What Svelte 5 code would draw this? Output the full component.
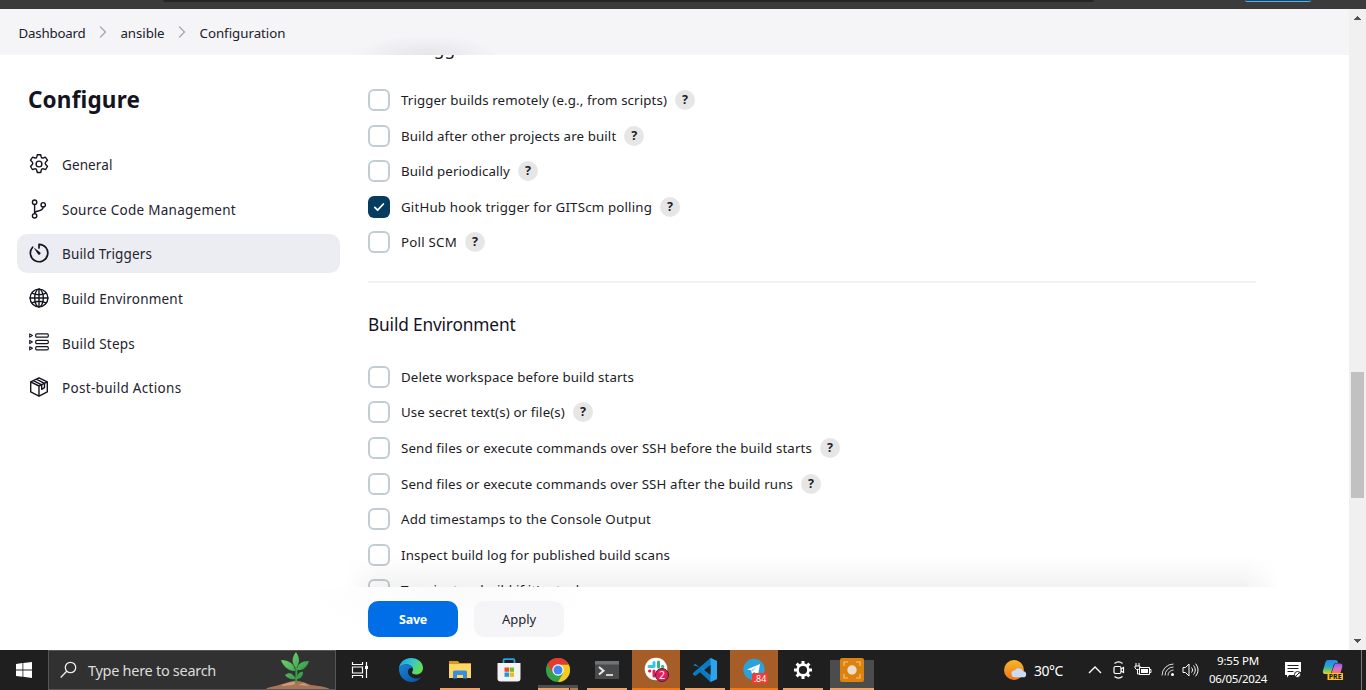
<script>
  const crumbs = [
    { label: 'Dashboard', width: 67 },
    { label: 'ansible', width: 44 },
    { label: 'Configuration', width: 86 }
  ];
  const nav = [
    { id: 'general', label: 'General', width: 50.5 },
    { id: 'scm', label: 'Source Code Management', width: 174 },
    { id: 'triggers', label: 'Build Triggers', width: 90 },
    { id: 'env', label: 'Build Environment', width: 121 },
    { id: 'steps', label: 'Build Steps', width: 73 },
    { id: 'post', label: 'Post-build Actions', width: 119.5 }
  ];
  const triggers = [
    { label: 'Trigger builds remotely (e.g., from scripts)', width: 266, help: true },
    { label: 'Build after other projects are built', width: 215.3, help: true },
    { label: 'Build periodically', width: 109, help: true },
    { label: 'GitHub hook trigger for GITScm polling', width: 251, help: true, checked: true },
    { label: 'Poll SCM', width: 56, help: true }
  ];
  const environment = [
    { label: 'Delete workspace before build starts', width: 233 },
    { label: 'Use secret text(s) or file(s)', width: 164, help: true },
    { label: 'Send files or execute commands over SSH before the build starts', width: 411, help: true },
    { label: 'Send files or execute commands over SSH after the build runs', width: 392, help: true },
    { label: 'Add timestamps to the Console Output', width: 250 },
    { label: 'Inspect build log for published build scans', width: 269 },
    { label: "Terminate a build if it's stuck", width: 182 }
  ];

  function track(node, width) {
    const natural = node.getBoundingClientRect().width;
    const count = node.textContent.length;
    node.style.letterSpacing = `${(width - natural) / count}px`;
  }
</script>

{#snippet option(o)}
  <label class="option">
    <span class="box" class:checked={o.checked}>
      {#if o.checked}
        <svg width="22" height="22" viewBox="0 0 22 22"><path d="M6.800 11.400l2.800 2.800 5.800-6.200" fill="none" stroke="#fff" stroke-width="1.700" stroke-linecap="round" stroke-linejoin="round" /></svg>
      {/if}
    </span>
    <span class="text" use:track={o.width}>{o.label}</span>
    {#if o.help}<span class="help">?</span>{/if}
  </label>
{/snippet}

<div class="screen">
  <div class="chrome"><i class="address"></i><i class="pill"></i></div>

  <div class="view">
    <div class="page">
      <nav class="crumbs">
        {#each crumbs as c, i}
          {#if i}<svg width="8" height="14" viewBox="0 0 8 14"><path d="M1.500 2l5 5-5 5" fill="none" stroke="#a5a5b8" stroke-width="1.300" stroke-linecap="round" stroke-linejoin="round" /></svg>{/if}
          <span use:track={c.width}>{c.label}</span>
        {/each}
      </nav>

      <div class="body">
        <aside>
          <h1 use:track={112}>Configure</h1>
          <ul>
            {#each nav as n}
              <li class:active={n.id === 'triggers'}>
                <svg width="22" height="22" viewBox="0 0 22 22" fill="none" stroke="#14141f" stroke-width="1.400" stroke-linecap="round" stroke-linejoin="round">
                  {#if n.id === 'general'}
                    <path d="M9.300 1.700h3.400l.5 2.300c.3.900 1 1.200 1.900 1l2.200-.8 2.200 3-1.700 1.700c-.8.800-.8 1.800-.1 2.700l1.800 1.900-1.900 3-2.400-.7c-.9-.2-1.500.2-1.800 1l-.7 2.700H9.300l-.7-2.700c-.3-.8-.9-1.200-1.800-1l-2.400.7-1.900-3 1.800-1.900c.7-.9.7-1.900-.1-2.700L2.500 7.200l2.200-3 2.200.8c.9.2 1.600-.1 1.900-1z" /><circle cx="11" cy="11" r="2.900" />
                  {:else if n.id === 'scm'}
                    <circle cx="6.600" cy="4.200" r="2.200" /><circle cx="6.600" cy="17.800" r="2.200" /><circle cx="15.200" cy="6.800" r="2.200" /><path d="M6.600 6.400v9.200M15.200 9c0 3.500-4 3.700-6.200 4.300-1.500.4-2.400 1-2.400 2.300" />
                  {:else if n.id === 'triggers'}
                    <path d="M11 6V2.300A8.700 8.700 0 1 1 4.600 5.200" stroke-width="1.700" /><path d="M6.700 6.700l3.300 5.100a1.200 1.200 0 1 0 1.800-1.500z" fill="#14141f" stroke-width=".6" />
                  {:else if n.id === 'env'}
                    <circle cx="11" cy="11" r="8.900" /><ellipse cx="11" cy="11" rx="4.300" ry="8.900" /><path d="M11 2v18M2 11h18M3.900 6.200c4.300 1.900 9.900 1.900 14.200 0M3.900 15.800c4.300-1.900 9.900-1.900 14.200 0" />
                  {:else if n.id === 'steps'}
                    {#each [4.500, 11, 17.300] as y}
                      <rect x="7.700" y={y - 1.600} width="12.600" height="3.200" rx="1.200" stroke-width="1.200" /><path d="M1.700 {y - 1.600}l2.700 1.600-2.700 1.600z" stroke-width="1.100" />
                    {/each}
                  {:else}
                    <path d="M11 1.800l8.300 4.100v9.900L11 20.200l-8.300-4.400V5.900zM2.700 5.900L11 10l8.300-4.100M11 10v10.200M5.400 4.700l8.300 4.100v4.600l2.800-1.700V7.300L8.200 3.200" />
                  {/if}
                </svg>
                <span use:track={n.width}>{n.label}</span>
              </li>
            {/each}
          </ul>
        </aside>

        <main>
          <section class="first">
            <h2><span use:track={112}>Build Triggers</span></h2>
            {#each triggers as o}{@render option(o)}{/each}
          </section>
          <section class="second">
            <h2><span use:track={147.5}>Build Environment</span></h2>
            {#each environment as o}{@render option(o)}{/each}
          </section>
          <div class="fade"></div>
        </main>
      </div>

      <footer>
        <button class="save"><span use:track={28}>Save</span></button>
        <button><span use:track={34}>Apply</span></button>
      </footer>
    </div>

    <div class="scrollbar">
      <svg width="17" height="17"><path d="M5 11h7v-1h-1v-1h-1v-1h-1v-1h-1v1h-1v1h-1v1h-1z" fill="#505050" /></svg>
      <i></i>
      <svg width="17" height="17"><path d="M5 6h7v1h-1v1h-1v1h-1v1h-1v-1h-1v-1h-1v-1h-1z" fill="#505050" /></svg>
    </div>
  </div>

  <div class="taskbar">
    <div class="start"><svg width="16" height="16" viewBox="0 0 16 16" fill="#fff"><path d="M0 2l6.500-.9v6.400H0zM7.300 1L16 0v7.500H7.300zM0 8.400h6.500v6.400L0 14zM7.300 8.400H16V16l-8.700-1.200z" /></svg></div>
    <div class="search">
      <svg width="18" height="18" viewBox="0 0 18 18" fill="none" stroke="#eee" stroke-width="1.300"><circle cx="10.500" cy="6.500" r="5.200" /><path d="M6.700 10.300L.7 16.500" /></svg>
      <span use:track={128}>Type here to search</span>
      <svg class="plant" width="70" height="38" viewBox="0 0 70 38">
        <defs><linearGradient id="leaf" x2="1" y2="1"><stop stop-color="#7edb73" /><stop offset="1" stop-color="#218b42" /></linearGradient></defs>
        <path d="M0 38c4-3 8-2 13-4 5-1 8-3 14-4 7-1 12 2 18 4 8 1 12 1 19 4z" fill="#a87459" /><path d="M15 34c6-1 9-4 16-3l-4 3-10 1zM32 34l6-2 5 3z" fill="#cf9a7a" />
        <path d="M30 32c1-8 0-15 0-23" stroke="#3c9d48" stroke-width="2" fill="none" />
        <path d="M30 17c-5-5-4-11 0-16 4 6 4 11 0 16zM29 20c-7 0-12-5-14-11 8 0 14 4 14 11zM31 19c0-6 5-9 12-9-2 6-6 10-12 9zM30 28c-5 1-9-1-11-4 4-3 8-2 11 4zM31 28c0-5 3-8 6-7 0 4-2 7-6 7z" fill="url(#leaf)" />
      </svg>
    </div>

    <div class="apps">
      <div class="app taskview"><svg width="18" height="18" viewBox="0 0 18 18" fill="none" stroke="#fff" stroke-width="1.200"><path d="M1.500 1v2.500h10V1M1.500 17v-2.500h10V17M1.500 6h10v6h-10zM15.500 1v16" /><path d="M14 5h3v3h-3z" fill="#fff" stroke="none" /></svg></div>
      <div class="app">
        <svg width="26" height="26" viewBox="0 0 26 26">
          <defs><linearGradient id="edgeTop" x2="1" y2=".4"><stop stop-color="#1c9ee0" /><stop offset=".55" stop-color="#34c6ce" /><stop offset="1" stop-color="#64dd55" /></linearGradient><linearGradient id="edgeLow" x2="1" y2="1"><stop stop-color="#1683d6" /><stop offset="1" stop-color="#0c519e" /></linearGradient></defs>
          <path d="M1 12C1 6 6 1 13 1c7 0 12 4.500 12 10 0 4-3 6.500-7 6.500-2 0-4-.8-4-2 0-.8 1-1.200 1-3C15 9.500 12 7.500 8.500 7.500 4.500 7.500 1.600 9.500 1 12z" fill="url(#edgeTop)" />
          <path d="M1 12c.6-2.500 3.500-4.500 7.500-4.500 3 0 5.500 1.300 6.300 3.400C11 10.500 10 13 10 15c0 4 4.500 6.500 8.500 6.500 1.600 0 3-.3 4.500-1.200C21 23.200 17.500 25 13.500 25 6.500 25 1 19.500 1 12z" fill="url(#edgeLow)" />
        </svg>
      </div>
      <div class="app open">
        <svg width="22" height="20" viewBox="0 0 22 20"><path d="M0 1h9l1.500 2H22v15H0z" fill="#d79a13" /><path d="M0 4h22v14H0z" fill="#ffd766" /><path d="M4 18.500V12a1.500 1.500 0 0 1 1.500-1.500h11A1.500 1.500 0 0 1 18 12v6.500h-4V15H8v3.500z" fill="#398fdb" /></svg>
      </div>
      <div class="app">
        <svg width="24" height="24" viewBox="0 0 24 24"><path d="M6.500 5.500V2.400A1.200 1.200 0 0 1 7.700 1.200h8.600a1.200 1.200 0 0 1 1.200 1.200v3.100" fill="none" stroke="#20a5e7" stroke-width="1.800" /><path d="M.5 5h23v15.500a3 3 0 0 1-3 3h-17a3 3 0 0 1-3-3z" fill="#f3f3f3" /><path d="M7.500 9.500H12v4.300H7.500z" fill="#ed4c2b" /><path d="M12.700 9.500h4.300v4.300h-4.300z" fill="#7db72f" /><path d="M7.500 14.500H12v4.300H7.500z" fill="#169edb" /><path d="M12.700 14.500h4.300v4.300h-4.300z" fill="#f6b61a" /></svg>
      </div>
      <div class="app open grouped">
        <svg width="24" height="24" viewBox="0 0 24 24"><circle cx="12" cy="12" r="12" fill="#34a347" /><path d="M12 6.500h10.700A12 12 0 0 1 12 24l5.200-9z" fill="#fbc91e" /><path d="M1.600 6A12 12 0 0 1 22.700 6.500H12L6.800 15z" fill="#e43b30" /><circle cx="12" cy="12" r="5.700" fill="#fff" /><circle cx="12" cy="12" r="4.500" fill="#4285f4" /></svg>
      </div>
      <div class="app open">
        <svg width="24" height="20" viewBox="0 0 24 20"><path d="M0 1h24v18H0z" fill="#484a4c" /><path d="M0 1h24v3.500H0z" fill="#707274" /><path d="M4 7l4.500 3.700L4 14.500" fill="none" stroke="#e8e8e8" stroke-width="2" /><path d="M11 15h7" stroke="#fff" stroke-width="1.500" /></svg>
      </div>
      <div class="app alert">
        <svg width="26" height="26" viewBox="0 0 26 26"><circle cx="12" cy="12" r="11.300" fill="#fff" /><g stroke-width="3" stroke-linecap="round"><path d="M10 5.500v4M5 9.500h5" stroke="#36c5f0" /><path d="M14.500 5v5M18.500 9.500h.3" stroke="#2eb67d" /><path d="M5.500 14h.3M10 14v5" stroke="#e01e5a" /><path d="M14.500 14.500h4" stroke="#ecb22e" /></g><circle cx="18" cy="18" r="6.500" fill="#e01e5a" stroke="#4a1930" /><text x="18" y="22" text-anchor="middle" font-size="10.500" fill="#fff">2</text></svg>
      </div>
      <div class="app open">
        <svg width="24" height="24" viewBox="0 0 24 24"><path d="M17.500 0L24 3v18l-6.500 3L7 14.200 2.300 18 0 16.800V15L17.500 0z" fill="#087bc5" /><path d="M0 7.200L2.300 6 18 18v-5.800z" fill="#1687d1" /><path d="M17.500 0L24 3v18l-6.500 3z" fill="#2ba3ee" /><path d="M17.600 7v10L11 12z" fill="#222" /></svg>
      </div>
      <div class="app alert">
        <svg width="28" height="28" viewBox="0 0 28 28"><circle cx="13" cy="13.500" r="10.700" fill="#2ba2dc" /><path d="M6 13.500L19 8l-2 11-4-3-2 2-1-3.700z" fill="#fff" /><path d="M10 14.300l6-4-4.500 5z" fill="#9dcde5" /><rect x="11" y="17" width="16" height="10.500" rx="1.500" fill="#f23c34" /><text x="19" y="25.600" text-anchor="middle" font-size="9" fill="#fff">.84</text></svg>
      </div>
      <div class="app open">
        <svg width="20" height="20" viewBox="0 0 20 20"><circle cx="10" cy="10" r="5.400" fill="none" stroke="#fff" stroke-width="2.600" />{#each [0, 45, 90, 135, 180, 225, 270, 315] as a}<path d="M8.500 1h3v3.500h-3z" fill="#fff" transform="rotate({a} 10 10)" />{/each}</svg>
      </div>
      <div class="app current">
        <svg width="24" height="24" viewBox="0 0 24 24"><rect width="24" height="24" rx="2" fill="#dc820f" /><path d="M4 8V4h4M16 4h4v4M20 16v4h-4M8 20H4v-4" fill="none" stroke="#f5c17a" stroke-width="1.200" /><circle cx="12" cy="12" r="4.700" fill="#e8dfcf" /></svg>
      </div>
    </div>

    <div class="tray">
      <svg class="left" width="24" height="24" viewBox="0 0 24 24"><defs><linearGradient id="sun" x2="0" y2="1"><stop stop-color="#f8b72b" /><stop offset="1" stop-color="#ef721c" /></linearGradient></defs><circle cx="11" cy="12" r="10" fill="url(#sun)" /><path d="M12 19.300a3.500 3.500 0 0 1 0-7 4.500 4.500 0 0 1 8 1 3 3 0 0 1 .3 6z" fill="#c7ddf7" /></svg>
      <span class="temp"><span use:track={29}>30°C</span></span>
      <svg width="14" height="8" viewBox="0 0 14 8"><path d="M1 7l6-6 6 6" fill="none" stroke="#fff" stroke-width="1.300" /></svg>
      <svg width="14" height="18" viewBox="0 0 14 18" fill="none" stroke="#fff" stroke-width="1.200"><rect x="2" y="5.500" width="7" height="7" rx="1.500" /><path d="M9 8l2.500-1.500v5L9 10M2.500 2.500c2.500-2 5.500-2 8 0M2.500 15.500c2.500 2 5.500 2 8 0" /></svg>
      <svg width="18" height="14" viewBox="0 0 18 14"><path d="M5.500 4.500h10v7h-10zM15.500 6.500H17v3h-1.500" fill="none" stroke="#fff" /><path d="M7 6h7v4H7z" fill="#fff" /><path d="M2 0v3M5 0v3M1 3h5v2L4.500 6.500h-2L1 5zM3.500 6v5h2" fill="none" stroke="#fff" /></svg>
      <svg width="14" height="14" viewBox="0 0 14 14" fill="none" stroke="#ddd"><path d="M1 12.500A11.500 11.500 0 0 1 12.500 1M4 12.500A8.500 8.500 0 0 1 12.500 4M7 12.500A5.500 5.500 0 0 1 12.500 7" /><circle cx="11.500" cy="11.500" r="1.500" fill="#fff" stroke="none" /></svg>
      <svg width="18" height="16" viewBox="0 0 18 16" fill="none" stroke="#fff"><path d="M1 5.500h2.500L7 2v12l-3.500-3.500H1zM9.500 5.500c1.300 1.500 1.300 3.500 0 5M11.500 3.500c2.300 2.500 2.300 6.500 0 9M13.500 1.700c3.300 3.600 3.300 9 0 12.600" /></svg>
      <div class="clock"><span use:track={42}>9:55 PM</span><span use:track={58}>06/05/2024</span></div>
      <svg width="18" height="18" viewBox="0 0 18 18"><path d="M1 1h16v10a5 5 0 0 0-6 3H5l-2 2.500V14H1z" fill="#fff" /><path d="M3.500 4.500h11M3.500 7.500h11M3.500 10.500h6" stroke="#222" /><circle cx="13.500" cy="13.500" r="3" fill="#fff" stroke="#222" /><path d="M11.500 15.500l4-4" stroke="#222" /></svg>
      <svg width="22" height="22" viewBox="0 0 22 22"><defs><linearGradient id="copA" x2="0" y2="1"><stop stop-color="#2687ed" /><stop offset=".45" stop-color="#2ba5cf" /><stop offset=".7" stop-color="#65c46b" /><stop offset="1" stop-color="#e8cf37" /></linearGradient><linearGradient id="copB" x2="0" y2="1"><stop stop-color="#8b5ce9" /><stop offset=".5" stop-color="#d56bd0" /><stop offset="1" stop-color="#f27771" /></linearGradient></defs><path d="M6 1h7.500c1.500 0 2.200 1.300 2.700 3h-2c-1.500 0-2.200 1-2.700 2.500L9.500 12.500c-.5 1.500-1 2.500-2.500 2.500H3c-2 0-2.500-1.500-2-3.500L3.500 3C4 1.700 5 1 6 1z" fill="url(#copA)" /><path d="M14 4.500h4c2 0 2.700 1.500 2.200 3.500L18.500 14h-9l2.500-7c.5-1.500 1-2.500 2-2.500z" fill="url(#copB)" /><rect x="5.500" y="14" width="15.500" height="7" fill="#f9c20b" /><text x="13.200" y="20.200" text-anchor="middle" font-size="7" font-weight="700" fill="#111">PRE</text></svg>
      <i class="peek"></i>
    </div>
  </div>
</div>

<style>
  :global(body) { overflow: hidden; }
  .screen { width: 1366px; height: 690px; display: flex; flex-direction: column; overflow: hidden; background: #fff; color: #14141f; font-family: "Noto Sans", "Open Sans", sans-serif; white-space: nowrap; }
  .screen span, h1 { white-space: pre; }
  svg { display: block; flex: none; }
  .chrome { height: 9px; flex: none; display: flex; background: #3b3b3b; }
  .address { width: 931px; height: 2px; margin-left: 163px; background: #262626; border-radius: 0 0 6px 6px; }
  .pill { width: 66px; height: 1px; margin-left: 151px; background: #064d83; border-bottom: 1px solid #6fa9cc; border-radius: 0 0 5px 5px; }
  .view { height: 641px; display: flex; flex: none; }
  .page { width: 1349px; display: flex; flex-direction: column; }
  .crumbs { box-sizing: border-box; height: 46px; flex: none; display: flex; align-items: center; gap: 13.500px; padding: 2px 0 0 18.500px; background: radial-gradient(ellipse 72px 22px at 426px 48px, #e4e4e9, #f5f5f8); font-size: 13.300px; font-weight: 420; color: #20202a; }
  .crumbs svg { margin-top: -3px; }
  .body { height: 532px; flex: none; display: flex; }
  aside { box-sizing: border-box; width: 368px; flex: none; padding: 28px 28px 0 17px; }
  h1 { display: inline-block; margin: 0 0 27.600px 11px; font-size: 22.500px; line-height: 34px; font-weight: 700; }
  ul { list-style: none; margin: 0; padding: 0; display: flex; flex-direction: column; gap: 5.600px; }
  li { height: 39px; display: flex; align-items: center; gap: 12px; padding-left: 11px; border-radius: 10px; font-size: 13.500px; font-weight: 440; color: #24242e; }
  li span { padding-top: 2.300px; }
  li.active { background: #ecedf3; }
  main { position: relative; width: 888px; height: 532px; overflow: hidden; padding: 0 24px; margin-left: -24px; }
  .first { box-sizing: border-box; margin-top: -18px; height: 246px; border-bottom: 2px solid #f2f2f4; }
  h2 { margin: 0; font-size: 17.300px; line-height: 24px; font-weight: 400; }
  .first h2 { margin-bottom: 21.200px; }
  .second { padding-top: 30px; }
  .second h2 { margin-bottom: 22px; }
  .option { height: 35.600px; display: flex; align-items: center; font-size: 13.300px; font-weight: 440; color: #1c1c26; }
  .box { box-sizing: border-box; width: 22px; height: 22px; margin-right: 11px; border: 2px solid #c2cdd2; border-radius: 6px; background: #fff; }
  .box.checked { border: 0; background: #063c60; }
  .help { width: 20px; height: 20px; margin-left: 8px; border-radius: 50%; background: #e6e6e7; text-align: center; font-size: 12.500px; line-height: 20px; font-weight: 700; }
  .fade { position: absolute; left: 0; right: 0; bottom: 0; height: 30px; background: linear-gradient(transparent, rgba(0, 0, 0, .05)); mask-image: linear-gradient(90deg, transparent, #000 36px, #000 calc(100% - 36px), transparent); }
  footer { height: 63px; display: flex; gap: 16px; padding: 14px 0 0 368px; box-sizing: border-box; background: radial-gradient(ellipse 150px 62px at 450px 0, #fafafa, #fff); }
  button { width: 90px; height: 36px; padding: 0; border: 0; border-radius: 10px; background: #f5f5f8; color: #24242e; font: 440 13px "Noto Sans", sans-serif; }
  .save { background: #006ee6; color: #fff; font-weight: 700; font-size: 12.500px; }
  .scrollbar { width: 17px; display: flex; flex-direction: column; background: #f0f0f0; }
  .scrollbar i { width: 13px; height: 126px; margin: 346px 2px 135px; background: #c1c1c1; }
  .taskbar { height: 40px; flex: none; display: flex; background: #1f1f1f; color: #fff; }
  .start { width: 48px; display: grid; place-items: center; }
  .search { box-sizing: border-box; width: 288px; height: 40px; display: flex; align-items: center; padding-left: 11px; border: 1px solid #565656; background: #313131; color: #ddd; font-size: 14.500px; overflow: hidden; }
  .search span { margin-left: 10px; }
  .plant { margin-left: 50px; }
  .apps { display: flex; width: 538px; }
  .app { box-sizing: border-box; width: 49px; height: 40px; display: grid; place-items: center; flex: none; }
  .taskview { width: 50px; padding-right: 2px; }
  .open { background: linear-gradient(#f6a05e, #f6a05e) 5px 38px / 40px 2px no-repeat; }
  .grouped { background: linear-gradient(#f6a05e, #f6a05e) 5px 38px / 31px 2px no-repeat, linear-gradient(#b57a4e, #b57a4e) 37px 38px / 8px 2px no-repeat, linear-gradient(#4e4e4e, #4e4e4e) 5px 35px / 40px 3px no-repeat; }
  .alert { background: linear-gradient(#ff7600, #ff7600) 0 38px / 100% 2px no-repeat, #a75d28; background-clip: content-box; padding-left: 1px; }
  .alert svg { margin-left: 2px; }
  .current { width: 44px; margin-left: 3px; background: linear-gradient(#f6a05e, #f6a05e) 0 38px / 44px 2px no-repeat, linear-gradient(#4c4c4c, #4c4c4c) 0 10px / 44px 28px no-repeat; }
  .tray { display: grid; grid-template-columns: 31px 46px 30px 18px 30px 20px 26px 68px 42px 38px 14px; margin-left: 129px; place-items: center; }
  .tray .left { justify-self: start; }
  .temp { justify-self: start; font-size: 14px; }
  .clock { display: flex; flex-direction: column; align-items: center; font-size: 11.500px; line-height: 18px; }
  .peek { justify-self: start; width: 1px; height: 40px; margin-left: 9px; background: #777; }
</style>
